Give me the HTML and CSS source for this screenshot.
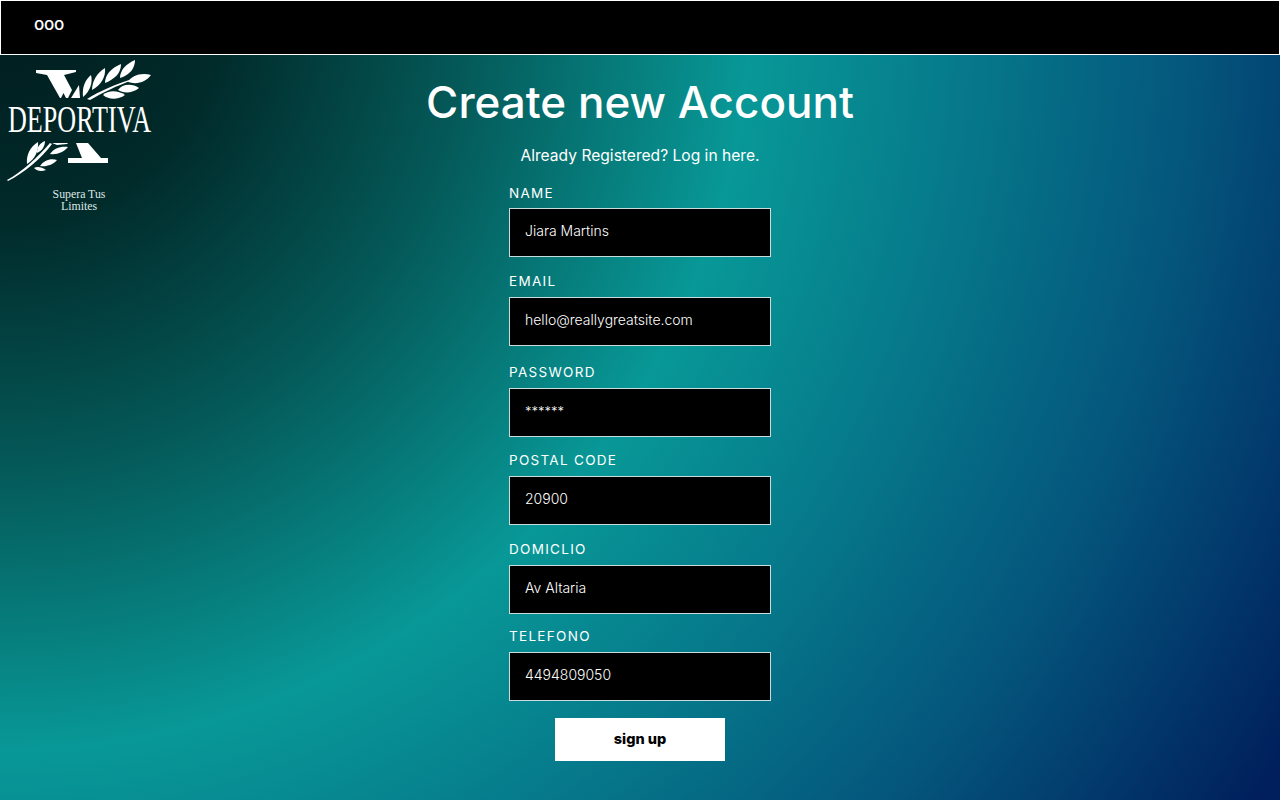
FILE: index.html
```html
<!DOCTYPE html>
<html lang="en">
<head>
<meta charset="utf-8">
<title>Create new Account</title>
<link rel="stylesheet" href="styles.css">
</head>
<body>
<header class="topbar"><span class="menu-dots">ooo</span></header>
<main class="page">
  <aside class="brand">
    <svg class="logo" viewBox="0 0 156 160" width="156" height="160" aria-label="Deportiva">
      <g fill="#fff">
        <path d="M36 15H76V17L64 20 72 35 68 43H66L63.500 38 61 43H60L47 20 36 18Z"/>
        <path d="M71 43 79 30 80 43Z"/>
        <path d="M83 42C82 32 85 25 91 20 93 28 90 36 83 42Z"/>
        <path d="M92 35C92 26 97 18 105 13 106 22 101 30 92 35Z"/>
        <path d="M105 28C105 20 111 13 121 9 121 18 115 24 105 28Z"/>
        <path d="M120 23C120 15 126 9 135 5 135 13 130 20 120 23Z"/>
        <path d="M128 27C131 21 141 17 151 20 146 27 137 30 128 27Z"/>
        <path d="M118 35C122 29 132 28 139 33 133 38 124 39 118 35Z"/>
        <path d="M103 40C108 35 118 35 125 40 118 45 109 45 103 40Z"/>
        <path d="M87 44C100 36 114 30 132 24L133 25C116 31 102 38 90 45Z"/>
        <path d="M76 88H88L101 103H108V108H68V103H82Z"/>
        <path d="M7 125C22 117 38 102 50 88L52 89C42 103 24 118 8 126Z"/>
        <path d="M27 109C26 100 30 92 38 87 39 96 35 104 27 109Z"/>
        <path d="M37 98C37 92 40 88 45 86 45 91 42 96 37 98Z"/>
        <path d="M34 113C37 111 42 112 46 115 41 117 37 116 34 113Z"/>
        <path d="M40 111C44 105 51 103 57 105 53 110 46 112 40 111Z"/>
        <path d="M50 99C54 93 61 91 68 92 64 97 57 100 50 99Z"/>
        <path d="M52 88H68L67 89 57 90Z"/>
        <text class="logo-word" x="8" y="77" textLength="143" lengthAdjust="spacingAndGlyphs">DEPORTIVA</text>
        <text class="logo-tag" x="79" y="143" text-anchor="middle">Supera Tus</text>
        <text class="logo-tag" x="79" y="155" text-anchor="middle">Limites</text>
      </g>
    </svg>
  </aside>
  <section class="signup">
    <h1 class="title">Create new Account</h1>
    <p class="subtitle">Already Registered? Log in here.</p>
    <form class="form">
      <div class="field field-first"><label class="label">NAME</label><div class="input">Jiara Martins</div></div>
      <div class="field field-email"><label class="label">EMAIL</label><div class="input">hello@reallygreatsite.com</div></div>
      <div class="field field-password"><label class="label">PASSWORD</label><div class="input input-secret">******</div></div>
      <div class="field field-postal"><label class="label">POSTAL CODE</label><div class="input">20900</div></div>
      <div class="field field-address"><label class="label">DOMICLIO</label><div class="input">Av Altaria</div></div>
      <div class="field field-phone"><label class="label">TELEFONO</label><div class="input">4494809050</div></div>
      <button class="submit" type="button">sign up</button>
    </form>
  </section>
</main>
</body>
</html>
```
FILE: styles.css
```css
* { box-sizing: border-box; }
html, body { margin: 0; height: 100%; }
body {
  width: 1280px;
  height: 800px;
  overflow: hidden;
  display: flex;
  flex-direction: column;
  color: #fff;
  font-family: Inter, "Open Sans", sans-serif;
  background: radial-gradient(circle at 0 0, #011c1d 0, #012a2a 220px, #045a59 470px, #089897 750px, #067a8b 960px, #04557c 1200px, #001f5c 1490px);
}
.topbar {
  flex: none;
  height: 55px;
  background: #000;
  border: 1px solid #fff;
  padding: 12px 0 0 33px;
}
.menu-dots {
  display: block;
  font-size: 17px;
  line-height: 22px;
  font-weight: 500;
  letter-spacing: -.3px;
}
.page {
  flex: 1;
  display: grid;
  grid-template-columns: 1fr 440px 1fr;
  align-items: start;
}
.logo { display: block; overflow: visible; }
.logo-word { font-family: "Liberation Serif", serif; font-size: 37px; }
.logo-tag { font-family: "Liberation Serif", serif; font-size: 11.8px; fill: #dfe8e6; }
.signup { grid-column: 2; display: flex; flex-direction: column; align-items: center; }
.title {
  margin: 20px 0 0;
  font-size: 44px;
  line-height: 54px;
  font-weight: 500;
  white-space: nowrap;
}
.subtitle { margin: 16px 0 0; font-size: 15.6px; line-height: 22px; }
.form { width: 262px; display: flex; flex-direction: column; align-items: stretch; }
.field { display: flex; flex-direction: column; }
.field-first { margin-top: 17px; }
.field-email { margin-top: 16px; }
.field-password { margin-top: 18px; }
.field-postal { margin-top: 15px; }
.field-address { margin-top: 16px; }
.field-phone { margin-top: 14px; }
.label {
  height: 24px;
  font-size: 13.5px;
  line-height: 16px;
  letter-spacing: 1.3px;
}
.field-first .label { padding-top: 1px; }
.input {
  height: 49px;
  background: #000;
  border: 1px solid #c9dcdc;
  padding: 13px 15px 0;
  font-size: 14px;
  line-height: 18px;
  font-weight: 300;
  color: #fff;
}
.input-secret { font-size: 13px; }
.submit {
  align-self: center;
  width: 170px;
  height: 43px;
  margin-top: 17px;
  background: #fff;
  border: 0;
  color: #000;
  font-family: Inter, sans-serif;
  font-size: 14.5px;
  font-weight: 800;
  padding: 0 0 2px;
}
```
